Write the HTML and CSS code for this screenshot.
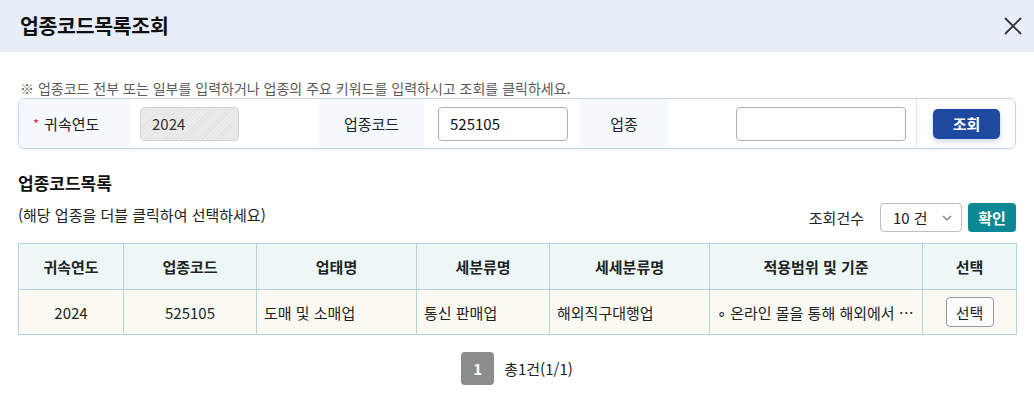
FILE: index.html
```html
<!DOCTYPE html>
<html lang="ko">
<head>
<meta charset="utf-8">
<title>업종코드목록조회</title>
<link rel="stylesheet" href="styles.css">
</head>
<body>
<div class="dialog">
  <header class="dlg-head">
    <h1 class="dlg-title">업종코드목록조회</h1>
    <button class="close-btn" aria-label="닫기">
      <svg width="18" height="18" viewBox="0 0 18 18"><path d="M1 1L17 17M17 1L1 17" stroke="#333" stroke-width="1.8" fill="none"/></svg>
    </button>
  </header>
  <div class="dlg-body">
    <p class="notice">※ 업종코드 전부 또는 일부를 입력하거나 업종의 주요 키워드를 입력하시고 조회를 클릭하세요.</p>
    <div class="search-box">
      <div class="lbl lbl-first"><span class="req">*</span>귀속연도</div>
      <div class="val val-year"><div class="inp inp-disabled">2024</div></div>
      <div class="lbl">업종코드</div>
      <div class="val val-code"><div class="inp inp-code">525105</div></div>
      <div class="lbl">업종</div>
      <div class="val val-name"><div class="inp inp-name"></div></div>
      <div class="btn-cell"><button class="btn-search">조회</button></div>
    </div>

    <h2 class="list-title">업종코드목록</h2>
    <div class="list-bar">
      <span class="hint">(해당 업종을 더블 클릭하여 선택하세요)</span>
      <div class="count-ctl">
        <span class="count-lbl">조회건수</span>
        <div class="select"><span>10 건</span>
          <svg width="10" height="6" viewBox="0 0 10 6"><path d="M1 1L5 5L9 1" stroke="#777" stroke-width="1.2" fill="none"/></svg>
        </div>
        <button class="btn-ok">확인</button>
      </div>
    </div>

    <table class="grid">
      <colgroup>
        <col style="width:105px"><col style="width:133px"><col style="width:160px"><col style="width:133px"><col style="width:160px"><col style="width:213px"><col style="width:94px">
      </colgroup>
      <thead>
        <tr><th>귀속연도</th><th>업종코드</th><th>업태명</th><th>세분류명</th><th>세세분류명</th><th>적용범위 및 기준</th><th>선택</th></tr>
      </thead>
      <tbody>
        <tr>
          <td class="c">2024</td>
          <td class="c">525105</td>
          <td>도매 및 소매업</td>
          <td>통신 판매업</td>
          <td>해외직구대행업</td>
          <td class="ellip">∘ 온라인 몰을 통해 해외에서 …</td>
          <td class="c"><button class="btn-pick">선택</button></td>
        </tr>
      </tbody>
    </table>

    <div class="pager">
      <span class="page-num">1</span>
      <span class="page-info">총1건(1/1)</span>
    </div>
  </div>
</div>
</body>
</html>
```

FILE: styles.css
```css
* { box-sizing: border-box; }
html, body { margin: 0; padding: 0; background: #fff; }
body {
  font-family: "Noto Sans CJK KR", "Noto Sans", sans-serif;
  color: #222;
  width: 1034px;
  height: 408px;
  overflow: hidden;
}
button { font-family: inherit; cursor: pointer; }

.dlg-head {
  height: 52px;
  background: #e8eef8;
  display: flex;
  align-items: center;
  justify-content: space-between;
  padding: 0 12px 0 20px;
}
.dlg-title {
  margin: 0 0 3px 0;
  font-size: 20.5px;
  font-weight: 700;
  color: #111;
  letter-spacing: -0.3px;
}
.close-btn {
  border: 0;
  background: transparent;
  padding: 0;
  width: 18px;
  height: 18px;
  display: flex;
}

.dlg-body { padding: 0 18px; }

.notice {
  margin: 26px 0 0 2px;
  font-size: 14px;
  line-height: 20px;
  color: #5a5a5a;
}

.search-box {
  display: grid;
  grid-template-columns: 111px 189px 105px 155px 90px 247px 1fr;
  height: 51px;
  border: 1px solid #c3d4ee;
  border-radius: 7px;
  overflow: hidden;
  box-shadow: 0 1px 3px rgba(120, 150, 200, 0.12);
}
.lbl {
  background: #f5f8fd;
  display: flex;
  align-items: center;
  justify-content: center;
  font-size: 15px;
  color: #222;
}
.lbl-first { justify-content: flex-start; padding-left: 14px; }
.req { color: #e0245e; font-size: 13px; margin-right: 5px; }
.val { display: flex; align-items: center; background: #fff; }
.val-year { padding-left: 10px; }
.val-code { padding-left: 14px; }
.val-name { padding-left: 67px; }
.inp {
  height: 34px;
  border: 1px solid #b0b0b0;
  border-radius: 4px;
  background: #fff;
  font-size: 15px;
  display: flex;
  align-items: center;
  padding-left: 11px;
  color: #111;
}
.inp-disabled {
  width: 99px;
  border-color: #d3d3d3;
  color: #333;
  background: repeating-linear-gradient(135deg, #ececec 0 2px, #e3e3e3 2px 3px);
}
.inp-code { width: 130px; }
.inp-name { width: 170px; }
.btn-cell {
  border-left: 1px solid #dde5f2;
  display: flex;
  align-items: center;
  padding-left: 16px;
}
.btn-search {
  width: 67px;
  height: 30px;
  border: 0;
  border-radius: 5px;
  background: #1d4a9e;
  color: #fff;
  font-size: 15px;
  font-weight: 700;
  box-shadow: 0 2px 6px rgba(29, 74, 158, 0.25);
}

.list-title {
  margin: 23px 0 0 0;
  font-size: 17px;
  font-weight: 700;
  line-height: 22px;
  color: #111;
}
.list-bar {
  display: flex;
  justify-content: space-between;
  align-items: center;
  margin-top: 9px;
}
.hint { font-size: 15px; color: #222; line-height: 20px; margin-bottom: 6px; }
.count-ctl { display: flex; align-items: center; }
.count-lbl { font-size: 15px; color: #222; margin-right: 16px; }
.select {
  width: 82px;
  height: 29px;
  border: 1px solid #bdbdbd;
  border-radius: 4px;
  display: flex;
  align-items: center;
  justify-content: space-between;
  padding: 0 9px 0 12px;
  font-size: 15px;
  color: #222;
}
.btn-ok {
  margin-left: 6px;
  width: 48px;
  height: 29px;
  border: 0;
  border-radius: 4px;
  background: #0c8794;
  color: #fff;
  font-size: 15px;
  font-weight: 700;
  padding: 0;
}

.grid {
  margin-top: 11px;
  width: 998px;
  border-collapse: collapse;
  table-layout: fixed;
  font-size: 15px;
}
.grid th, .grid td {
  border: 1px solid #b5d4da;
  height: 46px;
  padding: 0 7px;
  white-space: nowrap;
  overflow: hidden;
}
.grid td { height: 45px; }
.grid th {
  background: #edf7f7;
  font-weight: 700;
  color: #222;
  text-align: center;
}
.grid td { background: #fafaf2; color: #222; }
.grid td.c { text-align: center; }
.btn-pick {
  width: 48px;
  height: 30px;
  border: 1px solid #9a9a9a;
  border-radius: 4px;
  background: #fdfdfd;
  font-size: 15px;
  color: #222;
  padding: 0;
}

.pager {
  display: flex;
  justify-content: center;
  align-items: center;
  gap: 10px;
  margin-top: 17px;
}
.page-num {
  width: 33px;
  height: 33px;
  border-radius: 4px;
  background: #8c8c8c;
  color: #fff;
  font-weight: 700;
  font-size: 15px;
  display: flex;
  align-items: center;
  justify-content: center;
}
.page-info { font-size: 15px; color: #222; }
```
